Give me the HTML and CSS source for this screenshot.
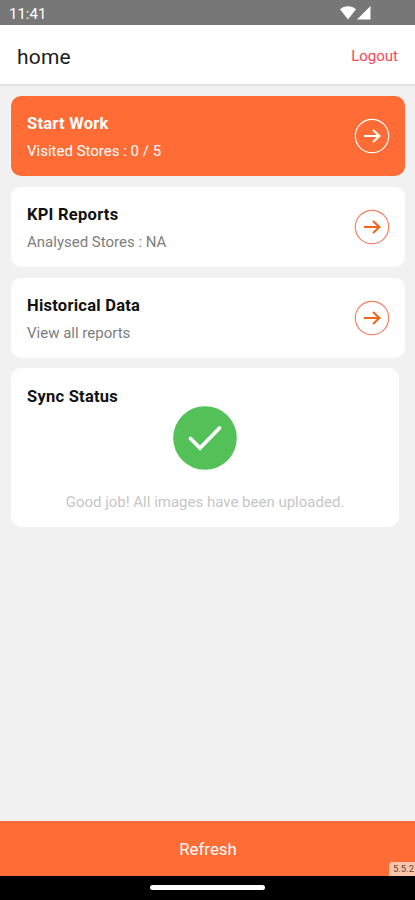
FILE: index.html
```html
<!DOCTYPE html>
<html lang="en">
<head>
<meta charset="utf-8">
<meta name="viewport" content="width=device-width, initial-scale=1">
<title>home</title>
<link rel="stylesheet" href="styles.css">
</head>
<body>
<div class="status-bar">
  <span class="clock">11:41</span>
  <svg class="signals" width="32" height="16" viewBox="0 0 32 16" fill="#fff"><path d="M0 4.200C4.500.2 11.500.2 16 4.200L8 14.500Z"/><path d="M17 14.500 30.500 1V14.500Z"/></svg>
</div>
<header class="app-header">
  <h1 class="title">home</h1>
  <a class="logout">Logout</a>
</header>
<main class="content">
  <section class="card card-primary">
    <div><h2 class="card-title">Start Work</h2><p class="card-text">Visited Stores : 0 / 5</p></div>
    <svg class="arrow" viewBox="0 0 36 36"><circle cx="18" cy="18" r="16.700"/><path d="M10 18H25.500M19 12 25.500 18 19 24"/></svg>
  </section>
  <section class="card">
    <div><h2 class="card-title">KPI Reports</h2><p class="card-text">Analysed Stores : NA</p></div>
    <svg class="arrow" viewBox="0 0 36 36"><circle cx="18" cy="18" r="16.700"/><path d="M10 18H25.500M19 12 25.500 18 19 24"/></svg>
  </section>
  <section class="card">
    <div><h2 class="card-title">Historical Data</h2><p class="card-text">View all reports</p></div>
    <svg class="arrow" viewBox="0 0 36 36"><circle cx="18" cy="18" r="16.700"/><path d="M10 18H25.500M19 12 25.500 18 19 24"/></svg>
  </section>
  <section class="card card-sync">
    <h2 class="card-title sync">Sync Status</h2>
    <svg class="check" viewBox="0 0 64 64"><circle cx="32" cy="32" r="31.800"/><path d="M17.500 32.500 27 42 46.500 22"/></svg>
    <p class="sync-text">Good job! All images have been uploaded.</p>
  </section>
</main>
<footer class="refresh"><span>Refresh</span><small class="version">5.5.2</small></footer>
<div class="nav-bar"><div class="nav-handle"></div></div>
</body>
</html>
```
FILE: styles.css
```css
* { box-sizing: border-box; }
body {
  margin: 0;
  height: 900px;
  display: flex;
  flex-direction: column;
  overflow: hidden;
  background: #f1f1f1;
  font-family: Roboto, sans-serif;
}
h1, h2, p { margin: 0; }
.status-bar {
  flex: none;
  height: 25px;
  padding: 2px 43px 0 9px;
  display: flex;
  justify-content: space-between;
  background: #777;
  color: #fff;
}
.clock { font-size: 15px; line-height: 24px; }
.signals { margin-top: 3px; }
.app-header {
  flex: none;
  height: 61px;
  padding: 0 17px;
  display: flex;
  align-items: center;
  justify-content: space-between;
  background: #fff;
  border-bottom: 2px solid #e2e2e2;
}
.title { padding-top: 4px; font-size: 21px; font-weight: 400; line-height: 28px; letter-spacing: 0.2px; color: #1c1c1e; }
.logout { padding-top: 3px; font-size: 15px; color: #f8475a; }
.content {
  flex: 1;
  padding: 10px 10px 0 11px;
  display: flex;
  flex-direction: column;
  gap: 11px;
}
.card {
  flex: none;
  height: 80px;
  padding: 0 15px 0 16px;
  display: flex;
  align-items: center;
  justify-content: space-between;
  border-radius: 10px;
  background: #fff;
  color: #7d7d7d;
}
.card-title { padding-top: 2px; font-size: 16.500px; font-weight: 700; line-height: 24px; letter-spacing: 0.250px; color: #111; }
.card-text { margin-top: 4px; font-size: 15px; line-height: 23px; }
.card-primary { background: #ff6c36; color: #fff; }
.card-primary .card-title { color: #fff; }
.arrow {
  width: 36px;
  height: 36px;
  fill: none;
  stroke: #f1641e;
  stroke-width: 2;
}
.arrow circle { stroke: #f48162; stroke-width: 1.200; }
.card-primary .arrow, .card-primary .arrow circle { stroke: #fff; }
.card-sync {
  height: 159px;
  margin: -1px 6px 0 0;
  padding: 15px 16px 0;
  flex-direction: column;
  align-items: center;
  justify-content: flex-start;
}
.sync { align-self: flex-start; }
.check {
  flex: none;
  width: 64px;
  height: 64px;
  margin-top: -3px;
  fill: #54c158;
}
.check path { fill: none; stroke: #fff; stroke-width: 3.800; stroke-linecap: round; }
.sync-text { margin-top: 20px; font-size: 15px; line-height: 24px; color: #c6c6c6; white-space: nowrap; }
.refresh {
  flex: none;
  position: relative;
  height: 55px;
  padding-left: 1px;
  display: flex;
  align-items: center;
  justify-content: center;
  background: #ff6c36;
  color: #fff;
  font-size: 16.800px;
}
.version {
  position: absolute;
  right: 0;
  bottom: 0;
  width: 26px;
  height: 14px;
  padding-left: 4px;
  border-radius: 4px 0 0 0;
  background: #ffc6ae;
  color: #653f32;
  font-size: 9.500px;
  line-height: 14px;
}
.nav-bar { flex: none; height: 24px; display: flex; justify-content: center; background: #000; }
.nav-handle { width: 115px; height: 5px; margin-top: 9px; border-radius: 3px; background: #fff; }
```
